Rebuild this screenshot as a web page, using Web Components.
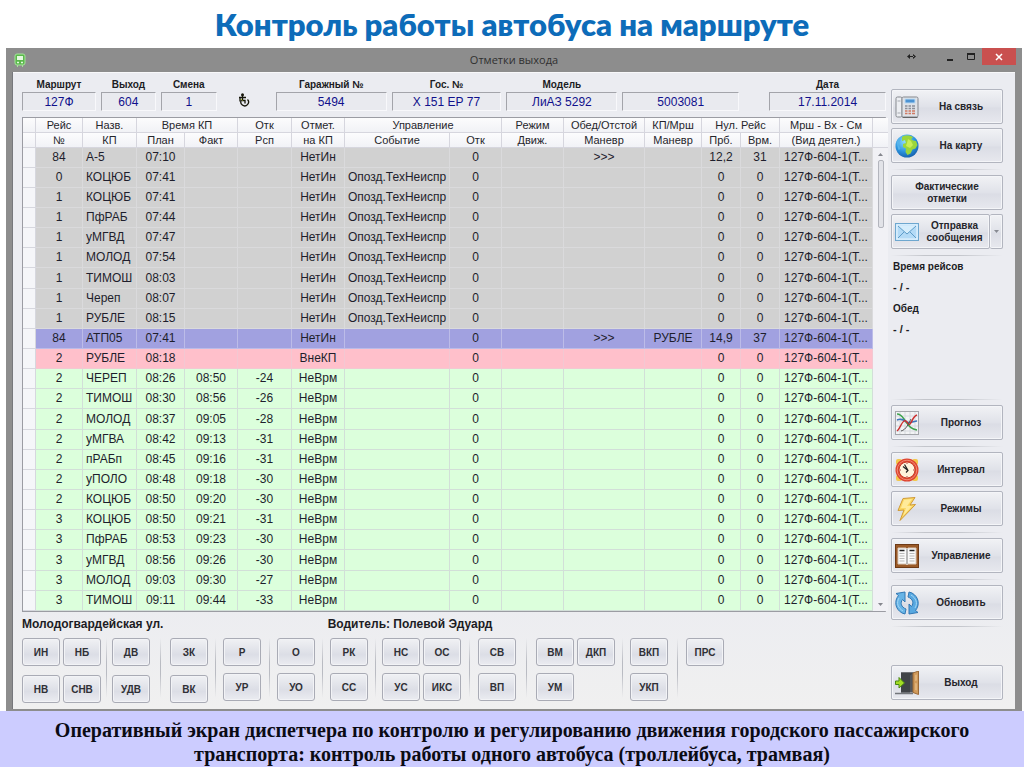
<!DOCTYPE html>
<html lang="ru">
<head>
<meta charset="utf-8">
<title>Контроль работы автобуса на маршруте</title>
<style>
html, body { margin: 0; background: #fff; }
body { font-family: "Liberation Sans", Arial, sans-serif; font-size: 12px; color: #1c1c24; }
</style>
</head>
<body>
<dispatch-slide></dispatch-slide>

<script>
const ICONS = {
  phone: `<rect x="1" y="2" width="6" height="20" rx="1.5" fill="#eceef2" stroke="#85898f"/><path d="M2.5 6h3M2.5 18h3" stroke="#a5a9b0"/><rect x="7" y="2" width="16" height="20" rx="1.5" fill="#dfe2e7" stroke="#85898f"/><rect x="10" y="4" width="10" height="4" fill="#4b93d3" stroke="#bcd9f2"/><path d="M10 11h2.500M13.500 11h2.500M17 11h3M10 13.500h2.500M13.500 13.500h2.500M17 13.500h3" stroke="#8b8f99" stroke-width="1.500"/><path d="M10 16h2.500M13.500 16h2.500M17 16h3M10 18.500h2.500M13.500 18.500h2.500M17 18.500h3" stroke="#cf7a62" stroke-width="1.500"/><path d="M7.500 22.500h15" stroke="#666"/>`,
  globe: `<defs><radialGradient id="g" cx=".4" cy=".3" r=".75"><stop offset="0" stop-color="#8fdcff"/><stop offset=".6" stop-color="#2a93de"/><stop offset="1" stop-color="#155da8"/></radialGradient></defs><circle cx="12" cy="12" r="11.500" fill="url(#g)"/><path d="M7 3C10 1 16 1 18 3.500L16 5l2 1.500 3 .5 1.500 4-2 3.500-3 1-2 4-3 1.500-2-3 .5-3.500-3-1.500L8 10l3-1-1-3-3 1z" fill="#9bd63b"/><path d="M13 5l3 2 2 4-3 3-4-2 1-3z" fill="#c9ee56"/><path d="M1.500 8l3-4 1 2-2 5 2 4-2 1z" fill="#56b3ea"/>`,
  mail: `<rect x=".5" y="3.500" width="23" height="17" fill="#c3e2f8" stroke="#6ea7cf"/><rect x="2" y="5" width="20" height="14" fill="#b3daf6" stroke="#e8f6ff"/><path d="M3 6l9 8 9-8" fill="#d5edfc" stroke="#5e9cc8"/><path d="M3 18l6-6M21 18l-6-6" stroke="#5e9cc8"/>`,
  chart: `<rect x=".5" y=".5" width="23" height="23" fill="#f2f3f5" stroke="#a4a6ab"/><path d="M5 1v22M10 1v22M15 1v22M20 1v22M1 5h22M1 10h22M1 15h22M1 20h22" stroke="#d6d9de"/><path d="M2 3c5 0 6 4 9 8s5 7 11 8" fill="none" stroke="#3ba24a" stroke-width="1.500"/><path d="M2 9c4-2 7 0 10 2s7-1 10-1" fill="none" stroke="#3f77bb" stroke-width="1.500"/><path d="M2 20c3-2 4-8 7-10s4 5 6 3 3-8 7-9" fill="none" stroke="#cc2f2f" stroke-width="1.500"/><path d="M6 20c5-1 8-8 10-12" fill="none" stroke="#555" />`,
  clock: `<rect x="1" y="1" width="6" height="6" rx="2" fill="#f3c84b"/><rect x="17" y="1" width="6" height="6" rx="2" fill="#f3c84b"/><rect x="1" y="17" width="6" height="6" rx="2" fill="#f3c84b"/><rect x="17" y="17" width="6" height="6" rx="2" fill="#f3c84b"/><circle cx="12" cy="12" r="11.500" fill="#df4430"/><circle cx="12" cy="12" r="9.800" fill="none" stroke="#f18a73"/><circle cx="12" cy="12" r="8" fill="#fff3dc" stroke="#c8402c"/><path d="M8 8.500l5 4M9.500 6.500L13 12.500l-2 2" fill="none" stroke="#222" stroke-width="1.200"/><path d="M12 5v1M12 18v1M5 12h1M18 12h1" stroke="#a44"/>`,
  bolt: `<path d="M8 1.500L20 .5l-5 7.500 5.500-.5L5 23.500l4-10.500-6 .5z" fill="#fbd862" stroke="#d09a38"/><path d="M9 3l8-1-5 7h5L8 19l3-8H6z" fill="#ffeb9a"/>`,
  book: `<rect x=".5" y=".5" width="23" height="23" fill="#9a5a28" stroke="#6e3a16"/><path d="M3 4h8l1 1 1-1h8v16h-8l-1 1-1-1H3z" fill="#fafafa" stroke="#d8c7b8"/><path d="M4.500 6.500h5M14.500 6.500h5" stroke="#222" stroke-width="1.500"/><path d="M4.500 9.500h5M4.500 12h5M4.500 14.500h5M4.500 17h5M14.500 9.500h5M14.500 12h5M14.500 14.500h5M14.500 17h5" stroke="#bbb"/><path d="M12 5v15" stroke="#777"/>`,
  refresh: `<path d="M10 1L1 2.500l2.500 2C-1 10 0 18 7 22l3 1 1-5c-5-2-6-6-3.500-9.500L10 11z" fill="#67b4e6" stroke="#3278b4"/><path d="M14 23l9-1.500-2.500-2C25 14 24 6 17 2l-3-1-1 5c5 2 6 6 3.500 9.500L14 13z" fill="#58a8e0" stroke="#3278b4"/><path d="M4 7c-3 5-1 10 4 13M20 17c3-5 1-10-4-13" fill="none" stroke="#a5d8f7"/>`,
  door: `<rect x="6" y="1.500" width="13" height="20" fill="#53565b"/><path d="M6 1.500h13l-4 3v17H6z" fill="#404347"/><path d="M18 2l5.500-2v23.500L18 21.500z" fill="#d09a5b" stroke="#9a6937"/><path d="M20 4l2-.5v6l-2 .5zM20 12l2 .5v7l-2-.5z" fill="#dfb27a"/><path d="M0 22.500h18" stroke="#73767b" stroke-width="1.500"/><path d="M.5 10h3.500V6.500L9.500 12 4 17v-3.500H.5z" fill="#a4dc24" stroke="#488712"/>`
};

class DispatchSlide extends HTMLElement {
  connectedCallback() {
    this.attachShadow({ mode: "open" }).innerHTML = `
<style>
:host { display: flex; flex-direction: column; min-height: 100vh; }
h1 { margin: 0; height: 48px; text-align: center; font: 800 31px/48px Lato, "Open Sans", sans-serif; color: #0d6cb9; }
app-window { flex: 1; margin: 0 2px 0 6px; }
footer { background: #ccccff; padding: 7px 40px 1px; text-align: center; font: 700 20px/24px "Liberation Serif", "Times New Roman", serif; color: #0b0b14; }
</style>
<h1>Контроль работы автобуса на маршруте</h1>
<app-window caption="Отметки выхода"><bus-screen></bus-screen></app-window>
<footer>Оперативный экран диспетчера по контролю и регулированию движения городского пассажирского<br>транспорта: контроль работы одного автобуса (троллейбуса, трамвая)</footer>`;
  }
}

class AppWindow extends HTMLElement {
  connectedCallback() {
    this.attachShadow({ mode: "open" }).innerHTML = `
<style>
:host { display: flex; flex-direction: column; background: #8d8d8d; }
header { display: grid; grid-template-columns: 1fr auto 1fr; height: 24px; font: 11px/24px "Open Sans", sans-serif; color: #303030; }
header > svg { margin: 5px 0 0 8px; }
nav { display: flex; justify-content: flex-end; margin-right: 6px; }
button { border: 0; padding: 0; background: none; height: 17px; width: 21px; display: grid; place-items: center; }
.help { margin-right: 18px; }
.close { background: #c9504f; width: 34px; }
main { flex: 1; display: flex; flex-direction: column; margin: 0 7px 2px 6px; background: linear-gradient(#ebecf1 80%, #f0f0f0); border-left: 1px solid #76777b; box-shadow: inset 0 1px #f8f8fa; }
::slotted(*) { flex: 1; }
</style>
<header>
<svg width="12" height="14" viewBox="0 0 12 14"><rect x="1" y="1" width="10" height="11" rx="2" fill="#5bb84c" stroke="#a5e29a"/><rect x="3" y="3" width="6" height="4" fill="#e4f8df"/><path d="M3 9.500h2M7 9.500h2" stroke="#e4f8df" stroke-width="1.500"/><path d="M3 13h1M8 13h1" stroke="#a5e29a" stroke-width="2"/></svg>
<span>${this.getAttribute("caption")}</span>
<nav>
<button class="help" aria-label="Изменить ширину"><svg width="9" height="7" viewBox="0 0 9 7"><path d="M0 3.500L3 1v5zM9 3.500L6 1v5zM2 3h5v1H2z" fill="#222"/></svg></button>
<button aria-label="Свернуть"><svg width="9" height="9"><path d="M1 8h6" stroke="#222" stroke-width="2"/></svg></button>
<button aria-label="Развернуть"><svg width="9" height="8"><path d="M.5 1h7v5.500h-7z" fill="none" stroke="#222"/><path d="M0 1h8" stroke="#222" stroke-width="2"/></svg></button>
<button class="close" aria-label="Закрыть"><svg width="8" height="8"><path d="M1 1l6 6M7 1L1 7" stroke="#fff" stroke-width="1.500"/></svg></button>
</nav>
</header>
<main><slot></slot></main>`;
  }
}

class BusScreen extends HTMLElement {
  connectedCallback() {
    this.attachShadow({ mode: "open" }).innerHTML = `
<style>
:host { display: grid; grid-template-columns: minmax(0, 1fr) 112px; column-gap: 5px; padding: 0 12px 0 9px; }
.left { display: flex; flex-direction: column; padding-top: 6px; }
.fields { display: grid; gap: 5px; grid-template-columns: 74fr 55fr 56fr 49fr 111fr 110fr 111fr 117fr 20fr 117fr; margin-bottom: 6px; align-items: end; }
.fields svg { justify-self: center; align-self: center; margin-top: 11px; margin-right: 6px; }
.status { display: grid; grid-template-columns: 306fr 559fr; font-weight: 700; font-size: 12px; line-height: 24px; margin-bottom: 2px; }
aside { display: flex; flex-direction: column; padding: 17px 0 9px; }
side-button + side-button { margin-top: 4px; }
hr { width: 100%; height: 1px; border: 0; margin: 6px 0 5px; background: linear-gradient(90deg, transparent, #c3c5cb 30%, #c3c5cb 60%, transparent); }
hr.tight { margin-bottom: 0; }
.times { flex: 1; margin: 0; padding-left: 2px; font: 700 10px/21px "Liberation Sans", sans-serif; }
.times dd { margin: 0; font-size: 11px; }
.exit { margin-top: 33px; }
</style>
<div class="left">
<div class="fields">
<info-field label="Маршрут" value="127Ф"></info-field>
<info-field label="Выход" value="604"></info-field>
<info-field label="Смена" value="1"></info-field>
<svg width="13" height="14" viewBox="0 0 13 14"><g fill="none" stroke="#15150a" stroke-width="1.300"><path d="M5.500 3v4.500M2 4.500h7M3 4.500v4M9 7.500"/><path d="M4.500 7a3.800 3.800 0 1 0 6 -.5"/><path d="M5 7.500h3v3"/></g><circle cx="5.500" cy="1.700" r="1.500" fill="#15150a"/><path d="M4 6l1.500 1.500" stroke="#b9cc38"/></svg>
<info-field label="Гаражный №" value="5494"></info-field>
<info-field label="Гос. №" value="Х 151 ЕР 77"></info-field>
<info-field label="Модель" value="ЛиАЗ 5292"></info-field>
<info-field value="5003081"></info-field>
<span></span>
<info-field label="Дата" value="17.11.2014"></info-field>
</div>
<marks-table></marks-table>
<div class="status"><span>Молодогвардейская ул.</span><span>Водитель: Полевой Эдуард</span></div>
<code-toolbar></code-toolbar>
</div>
<aside>
<side-button icon="phone">На связь</side-button>
<side-button icon="globe">На карту</side-button>
<hr>
<side-button>Фактические отметки</side-button>
<side-button icon="mail" menu>Отправка сообщения</side-button>
<hr class="tight">
<dl class="times"><dt>Время рейсов</dt><dd>- / -</dd><dt>Обед</dt><dd>- / -</dd></dl>
<hr>
<side-button icon="chart">Прогноз</side-button>
<hr>
<side-button icon="clock">Интервал</side-button>
<side-button icon="bolt">Режимы</side-button>
<hr>
<side-button icon="book">Управление</side-button>
<hr>
<side-button icon="refresh">Обновить</side-button>
<hr>
<side-button class="exit" icon="door">Выход</side-button>
</aside>`;
  }
}

class InfoField extends HTMLElement {
  connectedCallback() {
    const label = this.getAttribute("label");
    this.attachShadow({ mode: "open" }).innerHTML = `
<style>
:host { display: flex; flex-direction: column; min-width: 0; }
label { font-weight: 700; font-size: 10px; line-height: 14px; text-align: center; white-space: nowrap; }
input { box-sizing: border-box; width: 100%; height: 19px; margin: 0; padding: 0; text-align: center; font: 12px "Liberation Sans", sans-serif; color: #10108c; background: #e9eaef; border: 1px solid; border-color: #a3a4aa #f8f8fb #f8f8fb #a3a4aa; border-radius: 0; outline: 0; }
</style>
${label ? `<label for="f">${label}</label>` : ""}<input id="f" readonly value="${this.getAttribute("value")}"${label ? "" : ' aria-label="Номер"'}>`;
  }
}

class SideButton extends HTMLElement {
  connectedCallback() {
    const icon = this.getAttribute("icon");
    this.attachShadow({ mode: "open" }).innerHTML = `
<style>
:host { display: flex; height: 35px; }
button { flex: 1; min-width: 0; display: flex; align-items: center; padding: 0 3px; border: 1px solid #b2b5bf; border-radius: 2px; background: linear-gradient(#f1f2f5, #e0e2e9 50%, #dbdde5 55%, #e7e8ee); box-shadow: inset 0 0 0 1px #f4f5f8; font: 700 10px/12px "Liberation Sans", sans-serif; color: #25252b; }
svg { flex: none; }
span { flex: 1; text-align: center; }
svg + span { padding-left: 4px; }
.drop { flex: 0 0 13px; justify-content: center; border-left: 0; padding: 0; }
</style>
<button>${icon ? `<svg width="24" height="24" viewBox="0 0 24 24">${ICONS[icon]}</svg>` : ""}<span><slot></slot></span></button>
${this.hasAttribute("menu") ? `<button class="drop" aria-label="Ещё"><svg width="5" height="3"><path d="M0 0h5L2.500 3z" fill="#888b93"/></svg></button>` : ""}`;
  }
}

const TAIL = "127Ф-604-1(Т...";
const EV = "Опозд.ТехНеиспр";
const ROWS = [
  ["g", "84", "А-5", "07:10", "", "", "НетИн", "", ">>>", "", "12,2", "31"],
  ["g", "0", "КОЦЮБ", "07:41", "", "", "НетИн", EV],
  ["g", "1", "КОЦЮБ", "07:41", "", "", "НетИн", EV],
  ["g", "1", "ПфРАБ", "07:44", "", "", "НетИн", EV],
  ["g", "1", "уМГВД", "07:47", "", "", "НетИн", EV],
  ["g", "1", "МОЛОД", "07:54", "", "", "НетИн", EV],
  ["g", "1", "ТИМОШ", "08:03", "", "", "НетИн", EV],
  ["g", "1", "Череп", "08:07", "", "", "НетИн", EV],
  ["g", "1", "РУБЛЕ", "08:15", "", "", "НетИн", EV],
  ["b", "84", "АТП05", "07:41", "", "", "НетИн", "", ">>>", "РУБЛЕ", "14,9", "37"],
  ["p", "2", "РУБЛЕ", "08:18", "", "", "ВнеКП"],
  ["n", "2", "ЧЕРЕП", "08:26", "08:50", "-24", "НеВрм"],
  ["n", "2", "ТИМОШ", "08:30", "08:56", "-26", "НеВрм"],
  ["n", "2", "МОЛОД", "08:37", "09:05", "-28", "НеВрм"],
  ["n", "2", "уМГВА", "08:42", "09:13", "-31", "НеВрм"],
  ["n", "2", "пРАБп", "08:45", "09:16", "-31", "НеВрм"],
  ["n", "2", "уПОЛО", "08:48", "09:18", "-30", "НеВрм"],
  ["n", "2", "КОЦЮБ", "08:50", "09:20", "-30", "НеВрм"],
  ["n", "3", "КОЦЮБ", "08:50", "09:21", "-31", "НеВрм"],
  ["n", "3", "ПфРАБ", "08:53", "09:23", "-30", "НеВрм"],
  ["n", "3", "уМГВД", "08:56", "09:26", "-30", "НеВрм"],
  ["n", "3", "МОЛОД", "09:03", "09:30", "-27", "НеВрм"],
  ["n", "3", "ТИМОШ", "09:11", "09:44", "-33", "НеВрм"]
];

class MarksTable extends HTMLElement {
  connectedCallback() {
    const widths = [13, 47, 54, 48, 53, 54, 53, 105, 52, 62, 81, 57, 39, 39, 93, 15];
    const body = ROWS.map(([kind, n, name, plan, fact = "", rsp = "", mark = "", ev = "", lunch = "", kp = "", prb = "0", vrm = "0"], i) =>
      `<tr class="${kind}"><td class="sel"></td><td>${n}</td><td class="name">${name}</td><td>${plan}</td><td>${fact}</td><td>${rsp}</td><td>${mark}</td><td>${ev}</td><td>0</td><td></td><td>${lunch}</td><td>${kp}</td><td>${prb}</td><td>${vrm}</td><td>${TAIL}</td>${i ? "" : `<td class="bar" rowspan="${ROWS.length}"><scroll-track></scroll-track></td>`}</tr>`).join("");
    this.attachShadow({ mode: "open" }).innerHTML = `
<style>
:host { display: block; border: 1px solid #9b9ca3; border-right-color: #b5b6bc; }
table { width: 100%; table-layout: fixed; border-collapse: separate; border-spacing: 0; }
th, td { box-sizing: border-box; padding: 0; text-align: center; white-space: nowrap; border: 0 solid #d6d6de; border-width: 0 1px 1px 0; }
th { height: 15px; font-weight: 400; font-size: 11px; line-height: 14px; background: linear-gradient(#fcfcfd, #f1f2f6); color: #26262c; }
td { height: 20px; font-size: 12px; line-height: 19px; color: #1e1e2c; }
tr:nth-child(7n) td { height: 21px; }
.g td { background: #d1d1d1; border-color: #dadadc; }
.b td { background: #a1a1e0; border-color: #bcbce8; }
.p td { background: #ffc0cb; border-color: #f3c8d2; }
.n td { background: #dcffdc; border-color: #d2dfd8; }
tr td.sel { background: #f5f6f9; border-color: #d6d7de; }
td.name { text-align: left; padding-left: 3px; }
tr td.bar { background: #f1f1f5; border: 0; height: 1px; }
th:last-child { border-right: 0; }
</style>
<table>
<colgroup>${widths.map(w => `<col style="width:${w}px">`).join("")}</colgroup>
<thead>
<tr class="top"><th></th><th>Рейс</th><th>Назв.</th><th colspan="2">Время КП</th><th>Отк</th><th>Отмет.</th><th colspan="2">Управление</th><th>Режим</th><th>Обед/Отстой</th><th>КП/Мрш</th><th colspan="2">Нул. Рейс</th><th>Мрш - Вх - См</th><th></th></tr>
<tr><th></th><th>№</th><th>КП</th><th>План</th><th>Факт</th><th>Рсп</th><th>на КП</th><th>Событие</th><th>Отк</th><th>Движ.</th><th>Маневр</th><th>Маневр</th><th>Прб.</th><th>Врм.</th><th>(Вид деятел.)</th><th></th></tr>
</thead>
<tbody>${body}</tbody>
</table>`;
  }
}

class ScrollTrack extends HTMLElement {
  connectedCallback() {
    this.attachShadow({ mode: "open" }).innerHTML = `
<style>
:host { display: flex; flex-direction: column; align-items: center; height: 100%; box-sizing: border-box; padding: 5px 0; gap: 4px; }
i { width: 4px; height: 66px; border: 1px solid #b3b5bd; border-radius: 2px; background: #e2e3e8; }
svg + i + svg { margin-top: auto; }
</style>
<svg width="5" height="3"><path d="M0 3h5L2.500 0z" fill="#85878e"/></svg><i></i><svg width="5" height="3"><path d="M0 0h5L2.500 3z" fill="#85878e"/></svg>`;
  }
}

class CodeToolbar extends HTMLElement {
  connectedCallback() {
    const groups = [
      [79, ["ИН", "НБ", "НВ", "СНВ"], 11, "low"], [38, ["ДВ", "УДВ"], 20, "low"], [38, ["ЗК", "ВК"], 15, "low"],
      [38, ["Р", "УР"], 16], [38, ["О", "УО"], 15], [38, ["РК", "СС"], 14],
      [79, ["НС", "ОС", "УС", "ИКС"], 17], [38, ["СВ", "ВП"], 20], [79, ["ВМ", "ДКП", "УМ"], 15],
      [38, ["ВКП", "УКП"], 18], [38, ["ПРС"], 0]
    ];
    this.attachShadow({ mode: "open" }).innerHTML = `
<style>
:host { display: grid; grid-template-columns: ${groups.map(g => g[0] + "px " + (g[2] ? g[2] + "px" : "")).join(" ")}; align-items: start; }
.group { display: grid; grid-template-columns: repeat(auto-fill, 38px); gap: 7px 3px; }
.low { row-gap: 9px; }
button { height: 28px; padding: 0; border: 1px solid #a9abb5; border-radius: 3px; background: linear-gradient(#f0f1f4, #dfe1e8 50%, #dcdee6 60%, #ebecf1); box-shadow: inset 0 0 0 1px #f2f3f6; font: 700 10px "Liberation Sans", sans-serif; color: #303036; }
i { width: 1px; height: 60px; justify-self: center; background: linear-gradient(transparent, #b9bbc2 40%, #b9bbc2 60%, transparent); }
</style>
${groups.map(([, codes, sep, cls = ""]) => `<div class="group ${cls}">${codes.map(c => `<button>${c}</button>`).join("")}</div>${sep ? "<i></i>" : ""}`).join("")}`;
  }
}

customElements.define("scroll-track", ScrollTrack);
customElements.define("marks-table", MarksTable);
customElements.define("code-toolbar", CodeToolbar);
customElements.define("side-button", SideButton);
customElements.define("info-field", InfoField);
customElements.define("bus-screen", BusScreen);
customElements.define("app-window", AppWindow);
customElements.define("dispatch-slide", DispatchSlide);
</script>
</body>
</html>
